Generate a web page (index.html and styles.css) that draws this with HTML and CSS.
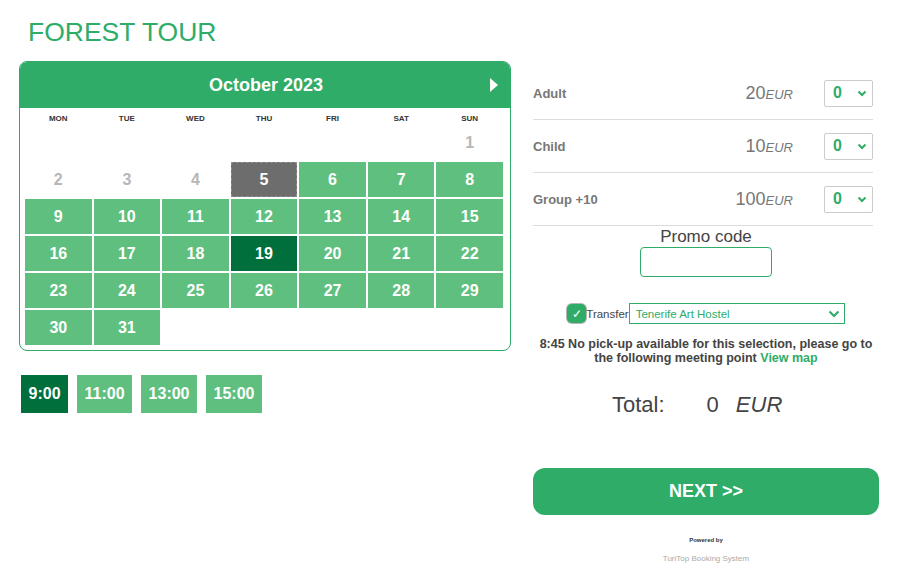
FILE: index.html
```html
<!DOCTYPE html>
<html>
<head>
<meta charset="utf-8">
<link rel="stylesheet" href="styles.css">
</head>
<body>
<div class="page">
  <div class="left">
    <h1 class="title">FOREST TOUR</h1>
    <div class="calendar">
      <div class="cal-head">
        <span></span>
        <span class="cal-month">October 2023</span>
        <span class="cal-next"></span>
      </div>
      <div class="cal-grid">
        <div class="dn">MON</div><div class="dn">TUE</div><div class="dn">WED</div><div class="dn">THU</div><div class="dn">FRI</div><div class="dn">SAT</div><div class="dn">SUN</div>
        <div class="d"></div><div class="d"></div><div class="d"></div><div class="d"></div><div class="d"></div><div class="d"></div><div class="d off">1</div>
        <div class="d off">2</div><div class="d off">3</div><div class="d off">4</div><div class="d today">5</div><div class="d av">6</div><div class="d av">7</div><div class="d av">8</div>
        <div class="d av">9</div><div class="d av">10</div><div class="d av">11</div><div class="d av">12</div><div class="d av">13</div><div class="d av">14</div><div class="d av">15</div>
        <div class="d av">16</div><div class="d av">17</div><div class="d av">18</div><div class="d sel">19</div><div class="d av">20</div><div class="d av">21</div><div class="d av">22</div>
        <div class="d av">23</div><div class="d av">24</div><div class="d av">25</div><div class="d av">26</div><div class="d av">27</div><div class="d av">28</div><div class="d av">29</div>
        <div class="d av">30</div><div class="d av">31</div>
      </div>
    </div>
    <div class="times">
      <div class="time sel">9:00</div>
      <div class="time">11:00</div>
      <div class="time">13:00</div>
      <div class="time">15:00</div>
    </div>
  </div>
  <div class="right">
    <div class="tickets">
      <div class="ticket">
        <span class="t-label">Adult</span>
        <span class="t-price">20<i>EUR</i></span>
        <span class="qty"><b>0</b><svg width="10" height="7" viewBox="0 0 10 7"><polyline points="1.5,1.5 5,5 8.5,1.5" fill="none" stroke="#2eac68" stroke-width="2"/></svg></span>
      </div>
      <div class="ticket">
        <span class="t-label">Child</span>
        <span class="t-price">10<i>EUR</i></span>
        <span class="qty"><b>0</b><svg width="10" height="7" viewBox="0 0 10 7"><polyline points="1.5,1.5 5,5 8.5,1.5" fill="none" stroke="#2eac68" stroke-width="2"/></svg></span>
      </div>
      <div class="ticket">
        <span class="t-label">Group +10</span>
        <span class="t-price">100<i>EUR</i></span>
        <span class="qty"><b>0</b><svg width="10" height="7" viewBox="0 0 10 7"><polyline points="1.5,1.5 5,5 8.5,1.5" fill="none" stroke="#2eac68" stroke-width="2"/></svg></span>
      </div>
    </div>
    <div class="promo">
      <div class="promo-label">Promo code</div>
      <div class="promo-input"></div>
    </div>
    <div class="transfer">
      <span class="check">✓</span>
      <span class="transfer-label">Transfer</span>
      <span class="hotel"><span>Tenerife Art Hostel</span><svg width="12" height="8" viewBox="0 0 12 8"><polyline points="1.5,1.5 6,6 10.5,1.5" fill="none" stroke="#2eac68" stroke-width="2.2"/></svg></span>
    </div>
    <p class="msg">8:45 No pick-up available for this selection, please go to the following meeting point <span class="link">View map</span></p>
    <div class="total">
      <span class="total-label">Total:</span>
      <span class="total-num">0</span>
      <i class="total-cur">EUR</i>
    </div>
    <div class="next">NEXT &gt;&gt;</div>
    <div class="powered">Powered by</div>
    <div class="brand">TuriTop Booking System</div>
  </div>
</div>
</body>
</html>
```
FILE: styles.css
```css
* { box-sizing: border-box; }
html, body { margin: 0; padding: 0; background: #fff; }
body { font-family: "Liberation Sans", Arial, sans-serif; color: #444; }

.page {
  display: flex;
  padding-left: 19px;
  gap: 22px;
  width: 898px;
  height: 582px;
}

.left { width: 492px; }

.title {
  margin: 16px 0 13px 9px;
  font-size: 26.5px;
  line-height: 32px;
  font-weight: normal;
  color: #2eac68;
}

.calendar {
  width: 492px;
  border: 1px solid #2eac68;
  border-radius: 8px;
  overflow: hidden;
}

.cal-head {
  height: 46px;
  background: #2eac68;
  display: grid;
  grid-template-columns: 1fr auto 1fr;
  align-items: center;
  color: #fff;
}
.cal-month { font-size: 18px; font-weight: bold; padding-left: 2px; }
.cal-next {
  justify-self: end;
  margin-right: 12px;
  width: 0; height: 0;
  border-left: 8px solid #fff;
  border-top: 7px solid transparent;
  border-bottom: 7px solid transparent;
}

.cal-grid {
  display: grid;
  grid-template-columns: repeat(7, 1fr);
  grid-template-rows: 15px;
  grid-auto-rows: 35px;
  gap: 2px;
  padding: 0 7px 5px 5px;
}
.dn {
  font-size: 8px;
  font-weight: bold;
  color: #333;
  display: flex;
  align-items: center;
  justify-content: center;
  padding-top: 5px;
}
.d {
  display: flex;
  align-items: center;
  justify-content: center;
  font-size: 16px;
  font-weight: bold;
  color: #fff;
}
.d.off { color: #b7b7b7; }
.d.av { background: #5fbf7e; }
.d.sel { background: #006f3c; }
.d.today { background: #6d6d6d; border: 1px dashed #8f8f8f; }

.times {
  display: flex;
  gap: 9px;
  margin: 24px 0 0 2px;
}
.time {
  height: 38px;
  padding: 0 7.5px;
  display: flex;
  align-items: center;
  background: #5fbf7e;
  color: #fff;
  font-size: 16px;
  font-weight: bold;
}
.time.sel { background: #006f3c; }

.right {
  width: 346px;
  padding-top: 67px;
}
.tickets { width: 340px; }
.ticket {
  height: 53px;
  display: flex;
  align-items: center;
  border-bottom: 1px solid #dcdcdc;
}
.t-label { flex: 1; font-size: 13px; font-weight: bold; color: #777; }
.t-price { font-size: 18px; color: #777; }
.t-price i { font-size: 13px; }
.qty {
  margin-left: 31px;
  width: 49px;
  height: 27px;
  border: 1px solid #ccc;
  border-radius: 2px;
  display: flex;
  align-items: center;
  justify-content: space-between;
  padding: 0 5px 0 8px;
}
.qty b { color: #2eac68; font-size: 16px; }

.promo {
  display: flex;
  flex-direction: column;
  align-items: center;
}
.promo-label { font-size: 17px; line-height: 21px; color: #444; }
.promo-input {
  width: 132px;
  height: 30px;
  border: 1px solid #2eac68;
  border-radius: 4px;
}

.transfer {
  margin-top: 26px;
  display: flex;
  align-items: center;
  justify-content: center;
}
.check {
  width: 19px;
  height: 19px;
  border-radius: 5px;
  background: #2eac68;
  box-shadow: 0 0 0 1px #b5b5b5;
  color: #fff;
  font-size: 12px;
  display: flex;
  align-items: center;
  justify-content: center;
}
.transfer-label { font-size: 11.5px; color: #444; }
.hotel {
  width: 216px;
  height: 21px;
  border: 1px solid #2eac68;
  display: flex;
  align-items: center;
  justify-content: space-between;
  padding: 0 4px 0 6px;
  color: #2eac68;
  font-size: 11.5px;
}

.msg {
  margin: 13px 0 0;
  text-align: center;
  font-size: 12.5px;
  line-height: 14px;
  font-weight: bold;
  color: #444;
}
.link { color: #2eac68; }

.total {
  margin-top: 27px;
  height: 26px;
  display: flex;
  align-items: center;
  padding-left: 79px;
  font-size: 22px;
  color: #444;
}
.total-num { margin-left: 42px; }
.total-cur { margin-left: 17px; }

.next {
  margin-top: 50px;
  height: 47px;
  border-radius: 12px;
  background: #2eac68;
  color: #fff;
  font-size: 18px;
  font-weight: bold;
  display: flex;
  align-items: center;
  justify-content: center;
}

.powered {
  margin-top: 22px;
  text-align: center;
  font-size: 6px;
  font-weight: bold;
  color: #333;
}
.brand {
  margin-top: 11px;
  text-align: center;
  font-size: 8px;
  color: #aaa;
}
```
